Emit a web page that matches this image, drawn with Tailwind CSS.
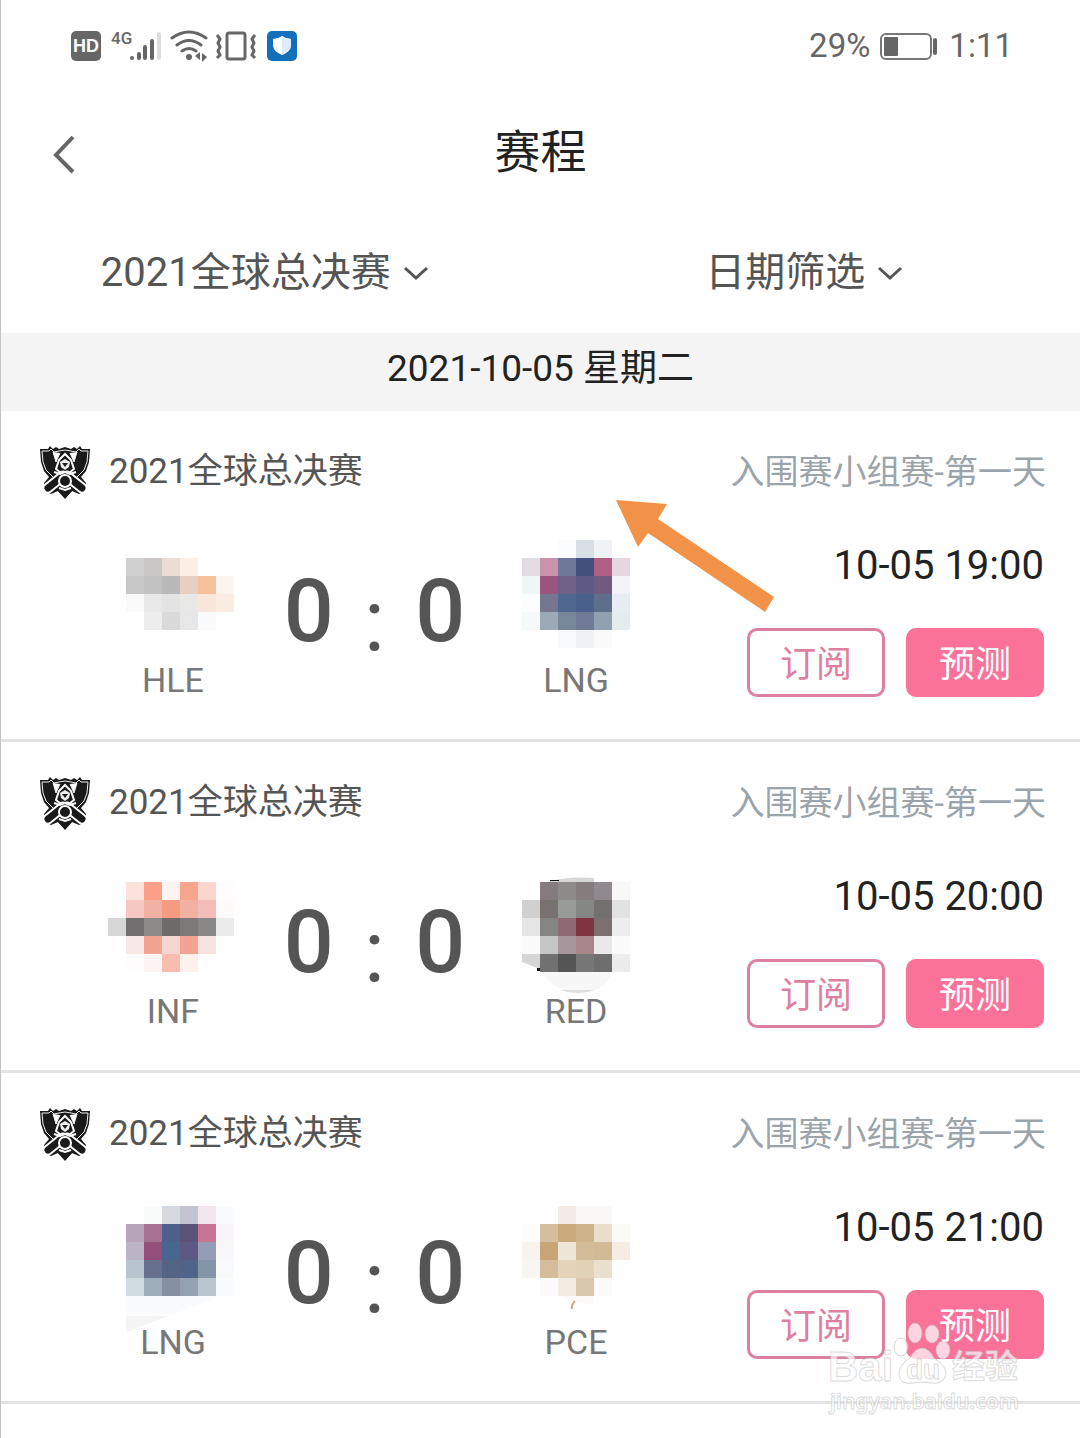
<!DOCTYPE html>
<html lang="zh-CN">
<head>
<meta charset="utf-8">
<meta name="viewport" content="width=device-width, initial-scale=1">
<title>赛程</title>
<script src="https://cdn.jsdelivr.net/npm/@tailwindcss/browser@4"></script>
</head>
<body class="relative min-h-screen border-l border-[#c4c4c4] bg-white font-['Roboto','Noto_Sans_CJK_SC',sans-serif] text-[#222]">

<!-- shared symbols -->
<svg class="hidden" aria-hidden="true">
  <symbol id="cup" viewBox="0 0 52 54">
    <path d="M1 4 9 4 11 1 14 4 17 2 20 4 26 2 32 4 35 2 38 4 41 1 43 4 51 4 50 17 47 26 42 32 47 38 46 46 40 49 33 46 26 54 19 46 12 49 6 46 5 38 10 32 5 26 2 17Z" fill="#1a1a1a"/>
    <path d="M3 6 10 6 12 4 15 7 20 6 26 5 32 6 37 7 40 4 42 6 49 6 48 17 45 25 38 32M3 6 4 17 7 25 14 32" fill="none" stroke="#eee" stroke-width="1"/>
    <path d="M14 7 17 17 21 8M31 8 35 17 38 7" fill="#fff" stroke="#eee" stroke-width="1"/>
    <path d="M26 9 20 15 17 24 22 28 30 28 35 24 32 15Z" fill="#1a1a1a" stroke="#fff" stroke-width="2"/>
    <path d="M21 17 26 14 31 17 30 22 26 25 22 22Z" fill="#eee"/>
    <path d="M23 18h6l-3 4Z" fill="#1a1a1a"/>
    <path d="M9 43 24 31M43 43 28 31" fill="none" stroke="#fff" stroke-width="11" stroke-linecap="round"/>
    <path d="M9 43 24 31M43 43 28 31" fill="none" stroke="#1a1a1a" stroke-width="7" stroke-linecap="round"/>
    <path d="M15 27 21 29 26 27 31 29 37 27" fill="none" stroke="#fff" stroke-width="2"/>
    <path d="M17 44 26 41 35 44 26 53Z" fill="#1a1a1a"/>
    <circle cx="26" cy="36" r="6" fill="#1a1a1a" stroke="#fff" stroke-width="2"/>
    <path d="M20 43 26 45 32 43" fill="none" stroke="#fff" stroke-width="2"/>
  </symbol>
  <symbol id="down" viewBox="0 0 26 16"><path d="M2 3 13 13 24 3" fill="none" stroke="#555" stroke-width="3"/></symbol>
</svg>

<!-- status bar -->
<div class="flex h-[92px] items-center justify-between pl-[70px] pr-[67px] text-[#666]">
  <div class="flex items-center">
    <div class="flex h-[30px] w-[30px] items-center justify-center rounded-[5px] bg-[#666] font-['Liberation_Sans',sans-serif] text-[18px] font-bold text-white">HD</div>
    <div class="ml-[10px] h-[36px] font-['Roboto',sans-serif] text-[17px] font-medium leading-[20px]">4G</div>
    <svg class="-ml-[4px] h-[34px] w-[34px]" viewBox="0 0 34 34" fill="none" stroke="#666" stroke-width="4" stroke-linecap="round">
      <path d="M4 29v0M11 29v-4M17 29v-11M24 29v-17"/><path d="M31 29v-24" stroke="#ddd"/>
    </svg>
    <svg class="ml-[8px] h-[34px] w-[40px]" viewBox="0 0 40 34" fill="none" stroke="#666" stroke-width="3" stroke-linecap="round">
      <path d="M2 9q17-12 34 0M7 16q12-9 24 0M12 22q7-5 14 0"/>
      <circle cx="19" cy="28" r="3" fill="#666" stroke="none"/>
      <path d="M25 27 30 23v8ZM32 24 37 28 32 33Z" fill="#666" stroke="none"/>
    </svg>
    <svg class="ml-[5px] h-[34px] w-[42px]" viewBox="0 0 42 34" fill="none" stroke="#666" stroke-width="4">
      <rect x="12" y="4" width="18" height="26" rx="2" stroke-width="3"/>
      <path d="M2 6 5 10 3 14 5 18 3 22 5 26 2 29M40 6 37 10 39 14 37 18 39 22 37 26 40 29" stroke-width="3"/>
    </svg>
    <svg class="ml-[10px] h-[30px] w-[30px]" viewBox="0 0 30 30">
      <rect width="30" height="30" rx="5" fill="#146fbb"/>
      <path d="M15 5q4 3 9 3v7q-1 6-9 9-8-3-9-9V8q5 0 9-3Z" fill="#fff"/>
      <path d="M15 5q4 3 9 3v7q-1 6-9 9Z" fill="#dcecf8"/>
    </svg>
  </div>
  <div class="flex items-center text-[33px]">
    <span>29%</span>
    <svg class="ml-[9px] h-[28px] w-[60px]" viewBox="0 0 60 28">
      <rect x="2" y="2" width="50" height="25" rx="5" fill="none" stroke="#777" stroke-width="2"/>
      <rect x="5" y="5" width="14" height="19" rx="1" fill="#666"/>
      <rect x="54" y="6" width="4" height="17" rx="2" fill="#666"/>
    </svg>
    <span class="ml-[10px]">1:11</span>
  </div>
</div>

<!-- title bar -->
<header class="relative flex h-[120px] items-center justify-center">
  <button class="absolute left-[50px] top-[40px]" aria-label="返回">
    <svg class="h-[44px] w-[28px]" viewBox="0 0 28 44"><path d="M22 5 5 23 22 40" fill="none" stroke="#666" stroke-width="4"/></svg>
  </button>
  <h1 class="text-[46px] leading-[60px]">赛程</h1>
</header>

<!-- filters -->
<form class="grid h-[121px] grid-cols-2 text-[40px] text-[#555]">
  <div class="flex items-center justify-center gap-3 pr-3">
    <select aria-label="赛事" class="appearance-none bg-transparent"><option>2021全球总决赛</option></select>
    <svg class="h-[16px] w-[26px]"><use href="#down"/></svg>
  </div>
  <div class="flex items-center justify-center gap-3 pr-3">
    <select aria-label="日期" class="appearance-none bg-transparent"><option>日期筛选</option></select>
    <svg class="h-[16px] w-[26px]"><use href="#down"/></svg>
  </div>
</form>

<main>
  <h2 class="flex h-[78px] items-center justify-center bg-[#f4f4f4] pb-[6px] text-[37px]">2021-10-05 星期二</h2>

  <article class="border-b-3 border-[#e3e3e3] pb-[39px]">
    <div class="flex items-center pl-[38px] pr-[34px] pt-[34px] text-[35px] leading-[50px]">
      <svg class="h-[54px] w-[52px]"><use href="#cup"/></svg>
      <h3 class="ml-[18px] text-[#555]">2021全球总决赛</h3>
      <p class="ml-auto text-[34px] text-[#9ba3ab]">入围赛小组赛-第一天</p>
    </div>
    <div class="flex pl-[72px] pr-[36px]">
      <div class="w-[200px] pt-[37px] text-center text-[34px] leading-[40px] text-[#777]">
        <svg class="h-[124px] w-[200px] overflow-visible" data-x="35" data-y="22" data-cells="- d0d0d0 cbc7c4 ebddd5 fbeee5 - -|- c7c7c7 c2c2c2 b9b9b9 e8d0c0 f5c09b fcf5f1|- fafafa e8e8e8 e3e3e3 e8e8e7 f8e6da fbece2|- - ededed dadada e7e7e7 fafbfc -"></svg>
        <p>HLE</p>
      </div>
      <div class="flex w-[203px] justify-center gap-[30px] pt-[68px] text-[88px] font-medium leading-[88px] text-[#555]">
        <span>0</span><span class="pt-[9px] font-normal">:</span><span>0</span>
      </div>
      <div class="w-[200px] pt-[37px] text-center text-[34px] leading-[40px] text-[#777]">
        <svg class="h-[124px] w-[200px] overflow-visible" data-x="46" data-y="4" data-cells="- - fbfcfd d8dee5 f0f3f6 -|e3dbe2 c893ab 6f7899 434f7c ae5f82 e4d7df|f0f6f5 99557e 706287 5b5b86 6f5a80 f3f3f7|fcfdfe 75768f 50678f 48608b 5d6f8a e7edf1|f6f9fa 9caab7 77879a 707a96 92a1b1 e5ecef|- - f7f9fb eef1f6 fafafa -"></svg>
        <p>LNG</p>
      </div>
      <div class="ml-auto pt-[43px]">
        <time class="block text-right text-[40px] leading-[48px]">10-05 19:00</time>
        <div class="mt-[38px] flex gap-[21px] text-[36px] leading-[60px]">
          <button class="h-[69px] w-[138px] rounded-[10px] border-3 border-[#dd7f9e] pt-1 text-[#dd7f9e]">订阅</button>
          <button class="h-[69px] w-[138px] rounded-[10px] border-3 border-[#fb7299] bg-[#fb7299] pt-1 text-white">预测</button>
        </div>
      </div>
    </div>
  </article>

  <article class="border-b-3 border-[#e3e3e3] pb-[39px]">
    <div class="flex items-center pl-[38px] pr-[34px] pt-[34px] text-[35px] leading-[50px]">
      <svg class="h-[54px] w-[52px]"><use href="#cup"/></svg>
      <h3 class="ml-[18px] text-[#555]">2021全球总决赛</h3>
      <p class="ml-auto text-[34px] text-[#9ba3ab]">入围赛小组赛-第一天</p>
    </div>
    <div class="flex pl-[72px] pr-[36px]">
      <div class="w-[200px] pt-[37px] text-center text-[34px] leading-[40px] text-[#777]">
        <svg class="h-[124px] w-[200px] overflow-visible" data-x="35" data-y="15" data-cells="- fce2dc fb9f87 fdf3f0 f9a48d fbd6ce fefcfc|- f5c8c3 f3b0a5 f49b82 f2b0a3 f4bcb8 fdfafa|d7d7d7 716f6f 8d8a8a 706b6b 7e7979 8a8787 ebebeb|- f6e9e6 f2a493 f3d6cf f3a391 f5e1dd -|- fefcfc fdf5f3 f9bcae fdf1ee - -"></svg>
        <p>INF</p>
      </div>
      <div class="flex w-[203px] justify-center gap-[30px] pt-[68px] text-[88px] font-medium leading-[88px] text-[#555]">
        <span>0</span><span class="pt-[9px] font-normal">:</span><span>0</span>
      </div>
      <div class="w-[200px] pt-[37px] text-center text-[34px] leading-[40px] text-[#777]">
        <svg class="h-[124px] w-[200px] overflow-visible" data-x="46" data-y="15" data-cells="- 857b7e 8d8b89 847c7d 918990 f8f8f8|d0d0d0 78726f 999b99 858785 74706f e2e2e2|e6e6e6 848483 906a72 803340 7b7070 ededed|fbfbfb c5c6c6 a5969b a88589 eae8e9 fbfbfb|- 717171 555555 777777 6e6e6e ececec">
          <path d="M74 14Q95 9 118 11V15H74ZM46 87H64V102L46 95Z" fill="#d6d6d6"/>
          <path d="M66 105H136Q128 126 102 126 78 124 66 105Z" fill="#f7f7f7"/>
          <path d="M84 123H119Q102 129 84 123Z" fill="#ddd"/>
          <path d="M61 101h4v3h-4ZM74 13h9v1h-9Z" fill="#111"/>
        </svg>
        <p>RED</p>
      </div>
      <div class="ml-auto pt-[43px]">
        <time class="block text-right text-[40px] leading-[48px]">10-05 20:00</time>
        <div class="mt-[38px] flex gap-[21px] text-[36px] leading-[60px]">
          <button class="h-[69px] w-[138px] rounded-[10px] border-3 border-[#dd7f9e] pt-1 text-[#dd7f9e]">订阅</button>
          <button class="h-[69px] w-[138px] rounded-[10px] border-3 border-[#fb7299] bg-[#fb7299] pt-1 text-white">预测</button>
        </div>
      </div>
    </div>
  </article>

  <article class="border-b-3 border-[#e3e3e3] pb-[39px]">
    <div class="flex items-center pl-[38px] pr-[34px] pt-[34px] text-[35px] leading-[50px]">
      <svg class="h-[54px] w-[52px]"><use href="#cup"/></svg>
      <h3 class="ml-[18px] text-[#555]">2021全球总决赛</h3>
      <p class="ml-auto text-[34px] text-[#9ba3ab]">入围赛小组赛-第一天</p>
    </div>
    <div class="flex pl-[72px] pr-[36px]">
      <div class="w-[200px] pt-[37px] text-center text-[34px] leading-[40px] text-[#777]">
        <svg class="h-[124px] w-[200px] overflow-visible" data-x="35" data-y="8" data-cells="- - fafcfc d5dae0 c4c4d0 f1e7ed fafbfc|- b7a4b8 a87093 4d608a 5c5279 c77493 f8f6f8|- bcb3c5 934e79 48678f 5d5984 969cb6 f8f8fa|- b8c5d0 67708f 536485 50648a 8495a8 f8f9fb|- d1dce2 9faebb 878fa5 94a1b3 b9c6cf fafbfd">
          <path d="M53 98H143V100L53 134Z" fill="#fafbfc"/>
          <path d="M53 118H95L53 134Z" fill="#f4f4f4"/>
        </svg>
        <p class="relative">LNG</p>
      </div>
      <div class="flex w-[203px] justify-center gap-[30px] pt-[68px] text-[88px] font-medium leading-[88px] text-[#555]">
        <span>0</span><span class="pt-[9px] font-normal">:</span><span>0</span>
      </div>
      <div class="w-[200px] pt-[37px] text-center text-[34px] leading-[40px] text-[#777]">
        <svg class="h-[124px] w-[200px] overflow-visible" data-x="46" data-y="8" data-cells="- fefefe f3ece6 faf8f4 faf8f4 -|fdfcfc d6bd9b c9ab7d cfb38b eadecb fbfaf7|f7f4f0 c7a575 eee4d7 d4bc99 d3ba97 f5ede4|f8f6f2 d5bd9b e2d3b9 e1d1b6 eae0d0 fefefe|- fcfafa f2ece3 dbc8ac fbfaf7 -">
          <path d="M82 98H118V107L94 103Z" fill="#fbfaf8"/>
          <path d="M99 103Q95 107 96 111" fill="none" stroke="#c1b07c" stroke-width="2"/>
        </svg>
        <p>PCE</p>
      </div>
      <div class="ml-auto pt-[43px]">
        <time class="block text-right text-[40px] leading-[48px]">10-05 21:00</time>
        <div class="mt-[38px] flex gap-[21px] text-[36px] leading-[60px]">
          <button class="h-[69px] w-[138px] rounded-[10px] border-3 border-[#dd7f9e] pt-1 text-[#dd7f9e]">订阅</button>
          <button class="h-[69px] w-[138px] rounded-[10px] border-3 border-[#fb7299] bg-[#fb7299] pt-1 text-white">预测</button>
        </div>
      </div>
    </div>
  </article>
</main>

<!-- pointer arrow over the first match -->
<svg class="absolute left-[615px] top-[500px] h-[112px] w-[158px]" viewBox="0 0 158 112" aria-hidden="true">
  <path d="M0 0 51 4 42 19 158 97 149 112 32 33 22 47Z" fill="#f29148"/>
</svg>

<!-- watermark -->
<div class="pointer-events-none absolute right-[58px] top-[1322px] h-[92px] w-[194px] text-white/70 [-webkit-text-stroke:1px_#bbbbbb88]">
  <svg class="absolute left-[64px] top-0 h-[64px] w-[60px]" viewBox="0 0 60 64" fill="#fff" fill-opacity=".7" stroke="#bbb" stroke-opacity=".6">
    <ellipse cx="9" cy="25" rx="7" ry="9"/><ellipse cx="23" cy="11" rx="7" ry="10"/><ellipse cx="40" cy="12" rx="7" ry="9"/><ellipse cx="51" cy="28" rx="7" ry="9"/>
    <path d="M30 26Q37 26 42 36 55 44 54 53 51 63 39 61 30 59 21 61 8 63 7 53 6 44 18 36 23 26 30 26Z"/>
  </svg>
  <div class="absolute left-0 top-[28px] font-['Liberation_Sans',sans-serif] text-[42px] font-bold leading-[34px]">Bai</div>
  <div class="absolute left-[78px] top-[34px] font-['Liberation_Sans',sans-serif] text-[28px] font-bold leading-[28px]">du</div>
  <div class="absolute left-[124px] top-[28px] text-[33px] font-bold leading-[34px]">经验</div>
  <div class="absolute left-[2px] top-[67px] font-['Noto_Sans',sans-serif] text-[21px] font-semibold leading-[24px]">jingyan.baidu.com</div>
</div>

<script>
  // Team logos are drawn as a mosaic of 18px cells; "-" leaves a cell empty.
  document.querySelectorAll('svg[data-cells]').forEach(function (svg) {
    svg.dataset.cells.split('|').forEach(function (row, r) {
      row.trim().split(' ').forEach(function (c, i) {
        if (c === '-') return;
        var q = document.createElementNS('http://www.w3.org/2000/svg', 'rect');
        q.setAttribute('x', +svg.dataset.x + i * 18);
        q.setAttribute('y', +svg.dataset.y + r * 18);
        q.setAttribute('width', 18);
        q.setAttribute('height', 18);
        q.setAttribute('fill', '#' + c);
        svg.appendChild(q);
      });
    });
  });
</script>
</body>
</html>
